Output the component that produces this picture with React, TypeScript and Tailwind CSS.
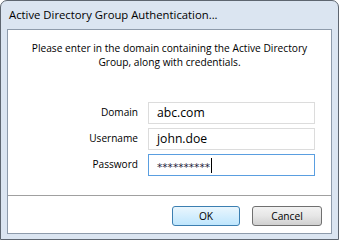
import React from "react"

function Field({ label, value, focused }: { label: string; value: string; focused?: boolean }) {
  return (
    <div className="flex items-center h-[22px]">
      <div className="w-[140px] pr-[10px] text-right text-[10.1px] text-black">{label}</div>
      <div
        className={
          "w-[167px] h-[22px] flex items-center pl-[8px] border bg-white " +
          (focused ? "border-[#5a9ee0]" : "border-[#dcdcdc]")
        }
      >
        {focused ? (
          <span className="flex items-center">
            <span className="text-[10.6px] leading-none text-[#1a1a3a] pt-[5px] font-['DejaVu_Sans',sans-serif]">
              {value}
            </span>
            <span className="w-px h-[15px] bg-black ml-[1px]"></span>
          </span>
        ) : (
          <span className="text-[12.2px] text-black">{value}</span>
        )}
      </div>
    </div>
  )
}

export default function App() {
  return (
    <div className="w-[339px] h-[240px] bg-white overflow-hidden font-['Open_Sans',sans-serif]">
      <div className="w-[339px] h-[240px] flex flex-col bg-[#dbe5f1] border border-[#5e6670] rounded-t-[7px]">
        <div className="h-[28px] flex items-center pl-[8px] text-[11.3px] text-black">
          Active Directory Group Authentication...
        </div>
        <div className="mx-[6px] mb-[5px] flex-1 flex flex-col bg-white border border-[#8e9bab]">
          <div className="h-[165px] flex flex-col">
            <p className="mt-[11px] text-center text-[10.2px] leading-[14px] text-black">
              Please enter in the domain containing the Active Directory
              <br />
              Group, along with credentials.
            </p>
            <div className="mt-[33px] flex flex-col gap-[4px]">
              <Field label="Domain" value="abc.com" />
              <Field label="Username" value="john.doe" />
              <Field label="Password" value="**********" focused />
            </div>
          </div>
          <div className="border-t border-[#a0a0a0] flex-1 flex justify-end items-start pt-[10px] pr-[9px] gap-[12px]">
            <button className="w-[68px] h-[20px] rounded-[3px] border border-[#3c7fb1] bg-gradient-to-b from-[#eaf6fd] to-[#bee6fd] text-[10.2px] text-black leading-none">
              OK
            </button>
            <button className="w-[70px] h-[20px] rounded-[3px] border border-[#707070] bg-gradient-to-b from-[#f2f2f2] via-[#e6e6e6] to-[#d0d0d0] text-[10.2px] text-black leading-none">
              Cancel
            </button>
          </div>
        </div>
      </div>
    </div>
  )
}
